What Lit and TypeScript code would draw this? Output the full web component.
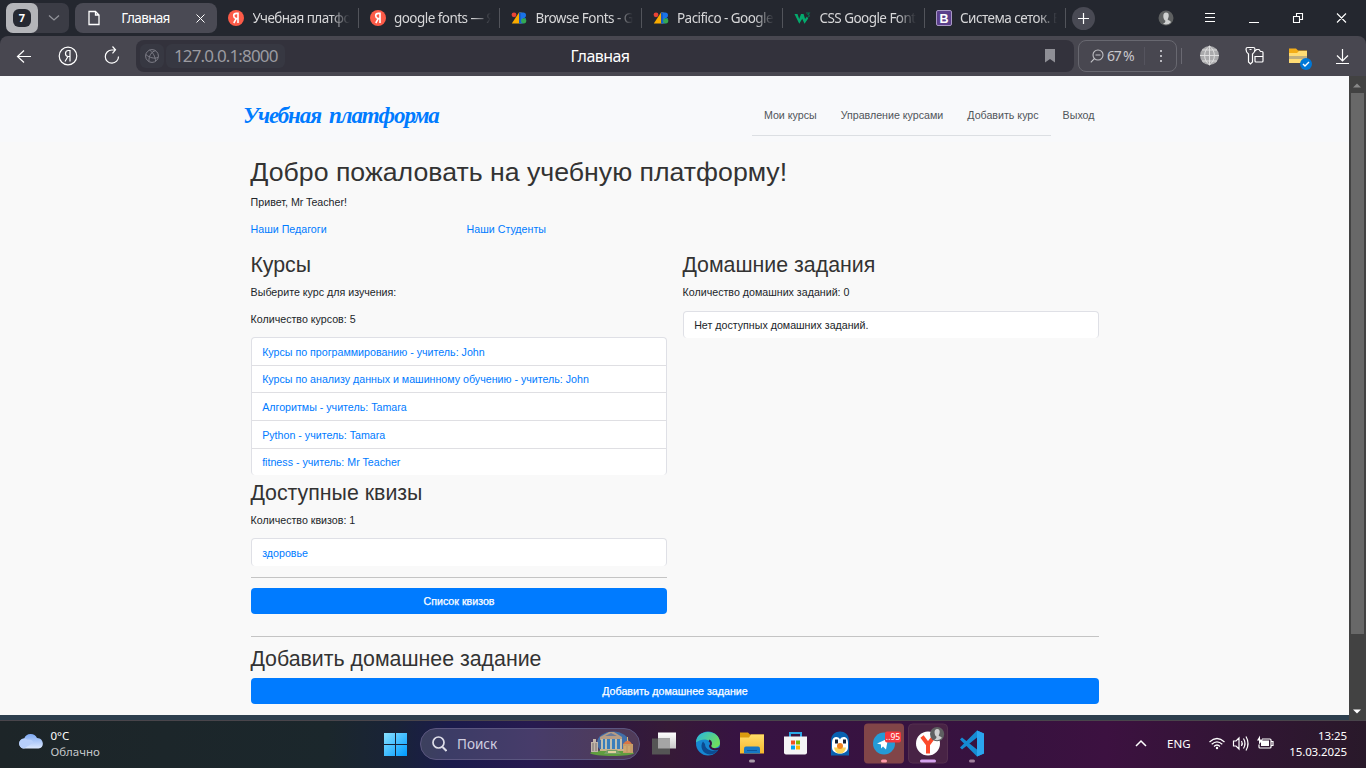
import { LitElement, html, css, svg } from "lit";
import { customElement, property } from "lit/decorators.js";

const yaIcon = html`<svg width="16" height="16" viewBox="0 0 16 16"><circle cx="8" cy="8" r="8" fill="#fc5b48"/><path d="M10 13V3.4H8.4C6.600 3.400 5.700 4.400 5.700 5.800c0 1.300.7 2.200 2.200 2.800H10M8.200 8.600 5.800 13" fill="none" stroke="#fff" stroke-width="1.600"/></svg>`;
const fontsIcon = html`<svg width="16" height="16" viewBox="0 0 16 16"><path d="M8 2.500h2.500v11H.8z" fill="#f9ab00"/><path d="M8.500 2.500h3.700a2.800 2.800 0 0 1 0 5.600H15l-3 5.400H8.500z" fill="#1a73e8"/><path d="M8 2.500h1.700v11H8z" fill="#185abc"/><circle cx="3" cy="4.800" r="2.400" fill="#ea4335"/><path d="M12 8.100a2.700 2.700 0 0 1 0 5.400z" fill="#0d652d"/><circle cx="12.700" cy="10.800" r="2.600" fill="#34a853"/></svg>`;
const w3Icon = html`<svg width="17" height="16" viewBox="0 0 17 16"><path d="M.5 4h3l1.700 5L7 4h2.600l1.500 5L13 6.500l1.200 2-3.700 5.200L8.200 8.800 5.300 13.700z" fill="#04aa6d"/><path d="M12 3h3.300l-1.300 1.500c1.500.2 1.700 1.800.2 2.500" fill="none" stroke="#06764e" stroke-width="1.100"/></svg>`;
const bIcon = html`<svg width="16" height="16" viewBox="0 0 16 16"><rect x=".5" y=".5" width="15" height="15" rx="1.500" fill="#5b3f8c" stroke="#a898c4"/><text x="8" y="12.500" font-family="Liberation Sans, sans-serif" font-size="12.500" font-weight="bold" fill="#fff" text-anchor="middle">B</text></svg>`;
const userDot = svg`<circle cx="8" cy="8" r="7.500" fill="#5e6061"/><path d="M8 2.500c2.300 0 3 1.700 2.700 3.700-.2 1.700-1 2.500-1 3.300 0 1 3 1 3.300 2.700A7.400 7.400 0 0 1 8 14.500a7 7 0 0 1-3-.7c2-.8 2.400-1.800 2.400-3C6 10 5.300 7.900 5.300 6c0-2 1-3.500 2.700-3.500z" fill="#cfd0d0"/>`;

interface Tab { title: string; icon: unknown; }
const tabs: Tab[] = [
  { title: "Учебная платформа", icon: yaIcon },
  { title: "google fonts — Яндекс", icon: yaIcon },
  { title: "Browse Fonts - Google", icon: fontsIcon },
  { title: "Pacifico - Google Fonts", icon: fontsIcon },
  { title: "CSS Google Fonts", icon: w3Icon },
  { title: "Система сеток. Bootstrap", icon: bIcon },
];

@customElement("browser-chrome")
class BrowserChrome extends LitElement {
  static styles = css`
    :host { display: block; height: 76px; background: #24272f; color: #e8e8ea; font: 14px "Noto Sans", sans-serif; }
    * { box-sizing: border-box; }
    svg { display: block; flex: none; }
    .tabs { display: flex; height: 36px; padding-left: 6px; align-items: center; }
    .group { display: flex; width: 63px; height: 30px; border-radius: 7px; background: #3b3c45; margin-right: 6px; }
    .count { width: 32px; height: 30px; border-radius: 7px; background: #b4b5b9; display: grid; place-items: center; }
    .badge { width: 18px; height: 18px; border-radius: 6px; background: #262932; color: #fff; font: bold 11px/18px "Noto Sans", sans-serif; text-align: center; }
    .more { display: grid; place-items: center; width: 31px; }
    .active { width: 142px; height: 30px; border-radius: 8px; background: #4a4a54; display: flex; align-items: center; padding-left: 13px; }
    .name { width: 67px; margin-left: 12px; text-align: center; letter-spacing: -.65px; font-size: 13.5px; color: #fff; }
    .close { margin-left: 17px; }
    .tab { width: 141.500px; height: 20px; display: flex; align-items: center; padding-left: 11px; border-right: 1px solid #52545b; }
    .label { flex: 1; margin: 0 8px 0 8.500px; overflow: hidden; white-space: nowrap; letter-spacing: -.55px; font-size: 13.5px; color: #d7d7d9; -webkit-mask-image: linear-gradient(90deg, #000 80%, transparent); mask-image: linear-gradient(90deg, #000 80%, transparent); }
    .plus { width: 23px; height: 23px; border-radius: 50%; background: #494a54; margin-left: 6px; display: grid; place-items: center; }
    .window { flex: 1; }
    .bar { display: flex; align-items: center; height: 40px; background: #484750; border-radius: 8px 8px 0 0; }
    .controls { width: 136px; }
    .address { width: 938px; height: 32px; border-radius: 8px; background: #33323c; display: flex; align-items: center; padding-left: 4px; }
    .site { width: 24px; height: 24px; border-radius: 6px; background: #373842; display: grid; place-items: center; }
    .host { width: 119px; height: 24px; margin-left: 2px; padding-left: 8px; background: #373842; border-radius: 6px; font-size: 17px; line-height: 23px; color: #9b9ba1; letter-spacing: -.85px; }
    .title { width: 80px; margin-left: 275px; font-size: 16px; letter-spacing: -.55px; color: #fff; text-align: center; }
    .mark { margin-left: 405px; }
    .zoom { width: 99px; height: 32px; margin-left: 4px; border: 1px solid #686870; border-radius: 8px; display: flex; align-items: center; padding-left: 11px; }
    .pct { width: 35px; margin: -2px 0 0 3px; color: #c8c8cc; letter-spacing: -1.2px; }
    .tools { width: 189px; }
  `;
  render() {
    return html`
      <div class="tabs">
        <div class="group"><div class="count"><div class="badge">7</div></div>
          <div class="more"><svg width="12" height="8" viewBox="0 0 12 8"><path d="M1 1.500 6 6l5-4.500" fill="none" stroke="#92939a" stroke-width="1.300"/></svg></div></div>
        <div class="active">
          <svg width="12" height="16" viewBox="0 0 12 16"><path d="M1 1.500h6.500L11 5v9.500H1zM7.500 1.500V5H11" fill="none" stroke="#fff" stroke-width="1.300"/></svg>
          <div class="name">Главная</div>
          <svg class="close" width="9" height="9" viewBox="0 0 9 9"><path d="m.5.5 8 8m0-8-8 8" stroke="#fff"/></svg>
        </div>
        ${tabs.map((t) => html`<div class="tab">${t.icon}<div class="label">${t.title}</div></div>`)}
        <div class="plus"><svg width="11" height="11" viewBox="0 0 11 11"><path d="M0 5.500h11M5.500 0v11" stroke="#fff" stroke-width="1.200"/></svg></div>
        <svg class="window" width="271" height="36" viewBox="0 0 271 36">
          <g transform="translate(63 10)">${userDot}</g>
          <g fill="none" stroke="#fff" stroke-width="1.100">
            <path d="M110 13.500h10M110 17.500h10M110 21.500h10M154 22.500h10M201.500 16v-2.500h6v6h-2.500M198.500 16.500h6v6h-6zM242 13.500l9 9m0-9-9 9"/>
          </g>
        </svg>
      </div>
      <div class="bar">
        <svg class="controls" width="136" height="40" viewBox="0 0 136 40">
          <g fill="none" stroke="#fff" stroke-width="1.200">
            <path d="M31 20.500H17.500m6.500-6-6.500 6 6.500 6"/>
            <circle cx="68" cy="20" r="8.800"/>
            <path d="M70 25.500v-11h-1.500c-2 0-3 1.200-3 3s1 2.800 2.500 3H70m-2 0-3 5"/>
            <path d="M118.500 20.500a6.600 6.600 0 1 1-6.700-6.500h3.200m-2.500-3.500 3 3.300-3 3.500"/>
          </g>
        </svg>
        <div class="address">
          <div class="site"><svg width="14" height="14" viewBox="0 0 14 14"><g fill="none" stroke="#7d7d87"><circle cx="7" cy="7" r="6.400"/><path d="M.8 5.500c4 3.500 8.500 4.300 12.200 3M10.500 1.700C6.500 2.500 3.500 7 4 12.600M4.500 1.200c3 1.500 6 6.500 6 11"/></g></svg></div>
          <div class="host">127.0.0.1:8000</div>
          <div class="title">Главная</div>
          <svg class="mark" width="10" height="14" viewBox="0 0 10 14"><path d="M0 0h10v13.500L5 10l-5 3.500z" fill="#8f8f96"/></svg>
        </div>
        <div class="zoom">
          <svg width="14" height="14" viewBox="0 0 14 14"><g fill="none" stroke="#c0c0c5" stroke-width="1.100"><circle cx="8" cy="6" r="5"/><path d="M4.500 9.500.8 13.300M5.500 6h5"/></g></svg>
          <div class="pct">67 %</div>
          <svg width="18" height="18" viewBox="0 0 18 18"><path d="M2.500 0v18" stroke="#55545e"/></svg>
          <svg width="3" height="13" viewBox="0 0 3 13"><path d="M0 0h2v2H0zM0 5h2v2H0zM0 10h2v2H0z" fill="#b8b8be"/></svg>
        </div>
        <svg class="tools" width="189" height="40" viewBox="0 0 189 40">
          <path d="M4.500 12v16" stroke="#6a6972"/>
          <circle cx="32.500" cy="19.500" r="9.500" fill="#aaaaac"/>
          <path d="M32.500 10v19M23 19.500h19M25 14h15M25 25h15M32.500 10c-6.500 5-6.500 14 0 19 6.500-5 6.500-14 0-19" fill="none" stroke="#e3e3e3" stroke-width=".9"/>
          <g fill="none" stroke="#fff" stroke-width="1.200"><path d="M69 13.200c0-1.200.7-1.700 1.700-1.700h5.600c1 0 1.700.5 1.700 1.700 0 2.200-1 3.800-2.500 4.800V26l-2 2-2-2v-8c-1.500-1-2.500-2.600-2.500-4.800zM72.500 13.500h2"/><path d="m78 15 1.500-1.500h2.500l1.500 2h1.500c.7 0 1 .4 1 1V25c0 .7-.3 1-1 1h-6c-.7 0-1-.3-1-1v-4.500h8"/></g>
          <path d="M112 12.500h7l2 2h9V27h-18z" fill="#f3ad18"/><path d="M112 17h8l2-2h8v12h-18z" fill="#ffdc74"/><path d="M112 20h18v3h-18z" fill="#a59b83" opacity=".7"/>
          <circle cx="129" cy="28" r="6" fill="#0078d7"/><path d="m126 28 2 2 4-4" fill="none" stroke="#fff" stroke-width="1.400"/>
          <path d="M165.500 13v12m-5.500-5.500 5.500 5.500 5.500-5.500M159 27.500h13" fill="none" stroke="#fff" stroke-width="1.200"/>
        </svg>
      </div>`;
  }
}

@customElement("course-list")
class CourseList extends LitElement {
  @property({ attribute: false }) items: string[] = [];
  @property({ type: Boolean }) plain = false;
  static styles = css`
    :host { display: block; border: 1px solid #dfe0e6; border-bottom: 0; border-radius: 4px; background: #fff; overflow: hidden; }
    .item { height: 26.670px; line-height: 16px; padding: 5.500px 10.170px 0; box-sizing: border-box; color: #007bff; }
    .item + .item { border-top: 1px solid #dfdfe3; height: 27.600px; }
    .item.plain { color: #212529; }
  `;
  render() {
    return this.items.map((i) => html`<div class="item ${this.plain ? "plain" : ""}">${i}</div>`);
  }
}

@customElement("study-page")
class StudyPage extends LitElement {
  static styles = css`
    :host { display: flex; height: 639px; background: #f9f9f9; font: 10.670px/16px "Liberation Sans", Arial, sans-serif; color: #212529; }
    * { box-sizing: border-box; }
    .body { flex: 1; }
    .nav { height: 66px; background: #f8f9fb; display: flex; padding: 0 242px 0 243px; justify-content: space-between; }
    .logo { width: 200px; height: 62px; padding-top: 22px; font: italic bold 23px/36px "Liberation Serif", serif; color: #007bff; white-space: nowrap; letter-spacing: -1.100px; word-spacing: 3.500px; }
    .links { display: flex; padding-top: 19px; }
    .link { height: 41px; padding: 12px 12.500px 0 11.500px; color: #50555a; border-bottom: 1px solid #dcdfe3; }
    .link:last-child { border-color: transparent; }
    .content { width: 848px; margin-left: 251px; padding-top: 14.300px; }
    h1, h2, p, hr { margin: 0; }
    h1 { font-size: 26.700px; line-height: 32px; font-weight: 400; margin: 0 0 5.700px -.7px; color: #333; }
    h2 { font-size: 21.330px; line-height: 25.600px; font-weight: 400; margin: 0 0 5.330px -.6px; color: #333; }
    p { margin: 0 0 10.670px -.4px; }
    .people { display: grid; grid-template-columns: 216px 1fr; color: #007bff; margin: 0 0 16px -.4px; }
    .columns { display: grid; grid-template-columns: 416px 416px; gap: 16px; padding-top: .3px; }
    .quiz { padding-top: 5.700px; }
    hr { height: 1px; border: 0; background: #c4c4c4; margin: 10.670px 0; }
    .button { height: 26px; border-radius: 4px; background: #007bff; color: #fff; text-align: center; line-height: 26px; -webkit-text-stroke: .25px #fff; }
    .quiz + hr { margin-bottom: 10px; }
    .end { margin: 22px 0 10.400px; }
    .end + h2 { margin-bottom: 5px; }
    .scroll { width: 17px; height: 644px; background: #424242; padding: 7px 2px 0 1px; display: flex; flex-direction: column; align-items: center; }
    .thumb { width: 13px; height: 541px; margin: 5px 0 75px; background: #686868; flex: none; }
  `;
  render() {
    return html`
      <div class="body">
        <nav class="nav">
          <div class="logo">Учебная платформа</div>
          <div class="links">${["Мои курсы", "Управление курсами", "Добавить курс", "Выход"].map((l) => html`<div class="link">${l}</div>`)}</div>
        </nav>
        <main class="content">
          <h1>Добро пожаловать на учебную платформу!</h1>
          <p>Привет, Mr Teacher!</p>
          <div class="people"><span>Наши Педагоги</span><span>Наши Студенты</span></div>
          <div class="columns">
            <section>
              <h2>Курсы</h2>
              <p>Выберите курс для изучения:</p>
              <p>Количество курсов: 5</p>
              <course-list .items=${["Курсы по программированию - учитель: John", "Курсы по анализу данных и машинному обучению - учитель: John", "Алгоритмы - учитель: Tamara", "Python - учитель: Tamara", "fitness - учитель: Mr Teacher"]}></course-list>
              <div class="quiz">
                <h2>Доступные квизы</h2>
                <p>Количество квизов: 1</p>
                <course-list .items=${["здоровье"]}></course-list>
              </div>
              <hr>
              <div class="button">Список квизов</div>
            </section>
            <section>
              <h2>Домашние задания</h2>
              <p>Количество домашних заданий: 0</p>
              <course-list plain .items=${["Нет доступных домашних заданий."]}></course-list>
            </section>
          </div>
          <hr class="end">
          <h2>Добавить домашнее задание</h2>
          <div class="button">Добавить домашнее задание</div>
        </main>
      </div>
      <div class="scroll">
        <svg width="8" height="5" viewBox="0 0 8 5"><path d="m0 4.500 4-4 4 4z" fill="#888"/></svg>
        <div class="thumb"></div>
        <svg width="8" height="5" viewBox="0 0 8 5"><path d="m0 .5 4 4 4-4z" fill="#fff"/></svg>
      </div>`;
  }
}

@customElement("task-bar")
class TaskBar extends LitElement {
  static styles = css`
    :host { display: flex; height: 48px; padding-bottom: 1px; align-items: center; color: #fff; font: 11.500px/16px "Noto Sans", sans-serif; border-top: 1px solid #49454b; box-sizing: border-box; background: linear-gradient(90deg, #1d2528 0, #1b272c 24%, #192338 29%, #1b1b4c 33%, #271a50 39%, #30193f 45%, #361a37 49%, #371342 54%, #37123f 74%, #3c1140 81%, #321535 90%, #29192a 100%); }
    * { box-sizing: border-box; }
    svg { display: block; flex: none; }
    .weather { width: 365px; display: flex; padding-left: 18px; align-items: center; }
    .cloud { margin-top: -6px; }
    .temp { margin-left: 6.500px; }
    .muted { color: #c4c8ca; }
    .search { width: 220px; height: 32px; margin: 0 0 0 12px; border-radius: 16px; border: 1px solid #5b5680; background: #ffffff26; display: flex; align-items: center; padding-left: 11px; }
    .query { flex: 1; margin-left: 10px; font-size: 13.500px; color: #d0cee0; }
    .tray { flex: 1; display: flex; align-items: center; }
    .lang { width: 42px; }
    .clock { flex: 1; text-align: right; padding-right: 19px; letter-spacing: -.1px; }
  `;
  render() {
    return html`
      <div class="weather">
        <svg class="cloud" width="26" height="18" viewBox="0 0 26 18"><defs><linearGradient id="c" x2="0" y2="1"><stop stop-color="#7ea9f2"/><stop offset="1" stop-color="#dce8ff"/></linearGradient></defs><path d="M6 16.500a5 5 0 0 1 .2-10A7 7 0 0 1 19 6c7 0 8 10 1.500 10.500z" fill="url(#c)"/><path d="M6 16.500a5 5 0 1 1 3.500-8.700c2.500-.8 5 .3 6 2.700" fill="#b7cffb"/></svg>
        <div class="temp"><div>0°C</div><div class="muted">Облачно</div></div>
      </div>
      <svg width="43" height="48" viewBox="365 0 43 48"><defs><linearGradient id="w" gradientUnits="userSpaceOnUse" x1="384" y1="12" x2="407" y2="35"><stop stop-color="#8ce2ff"/><stop offset="1" stop-color="#009cff"/></linearGradient></defs><path d="M384 13h11v11h-11zM396 13h11v11h-11zM384 25h11v11h-11zM396 25h11v11h-11z" fill="url(#w)"/></svg>
      <div class="search">
        <svg width="15" height="16" viewBox="0 0 15 16"><circle cx="6.500" cy="6.500" r="5.500" fill="none" stroke="#dedee9" stroke-width="1.700"/><path d="m10.500 11 4 4" stroke="#dedee9" stroke-width="2"/></svg>
        <div class="query">Поиск</div>
        <svg width="50" height="26" viewBox="0 0 50 26">
          <ellipse cx="24" cy="12" rx="16" ry="11.500" fill="#426fa8"/><path d="M1 22c5-4 40-4 44 0 0 4-42 4-44 0z" fill="#609d3f"/>
          <path d="M2 11h7v10H2zm2-3h3v3H4z" fill="#c2b5aa"/><path d="M4 12v8m3-8v8" stroke="#756f70"/><path d="M34 13h10v9H34z" fill="#c69c68"/><path d="M34 13q5-7 9 0z" fill="#d87745"/><path d="M38.500 6v4M36 15v6m4-6v6" stroke="#d8b276"/>
          <path d="M11 6 20 1h5l8 5v3H11z" fill="#b59c85"/><path d="M16 5l6-3 6 3z" fill="#687a9b"/><path d="M12 8h21v11H12z" fill="#397ebc"/><path d="M13 8v12m4-12v12m5-12v12m5-12v12m5-12v12" stroke="#e2cfad" stroke-width="1.600"/><path d="M11 18h24v2H11z" fill="#c9b28a"/><path d="M18 19h10l4 4H15z" fill="#78a069"/><path d="M19 20h8v2h-8z" fill="#e2cf9d"/>
        </svg>
      </div>
      <svg width="360" height="48" viewBox="640 0 360 48">
        <defs>
          <linearGradient id="t" x2="0" y2="1"><stop stop-color="#fff"/><stop offset="1" stop-color="#c8c8c8"/></linearGradient>
          <linearGradient id="e" x2="1" y2=".5"><stop stop-color="#25b5e6"/><stop offset="1" stop-color="#6edd60"/></linearGradient>
          <linearGradient id="f" x2="0" y2="1"><stop stop-color="#ffdc69"/><stop offset="1" stop-color="#f5b72d"/></linearGradient>
        </defs>
        <g transform="translate(0 .5)">
        <path d="M658 12h18v16h-18z" fill="url(#t)"/><path d="M652 18h18v16h-18z" fill="#555"/><path d="M658 18h12v10h-12z" fill="#a5a5a5"/>
        <circle cx="708" cy="23" r="12" fill="#1687d2"/><path d="M696 22c0-14 24-14 24 .5 0 5-8 6.500-10 3.500 2-3 0-7-5-7-4 0-7.500 1.500-9 3z" fill="url(#e)"/><path d="M703 21c-4 5 0 15 10 12.500 2-.5 4-2 5-4-6 2-13 0-13-6z" fill="#0c4b91"/><path d="M709 20c2.500 1 2.500 3.500 1 5.500 1 4 7 4 10 2" fill="none" stroke="#371342" stroke-width="2"/>
        <path d="M740 12h8l2 2h14v18h-24z" fill="#d99a0e"/><path d="M740 17h9l2-3h13v19h-24z" fill="url(#f)"/><path d="M744 33v-5q0-2 2-2h12q2 0 2 2v5z" fill="#1678c5"/><path d="M747 30h10" stroke="#0c569d"/><rect x="749" y="39" width="6" height="3" rx="1.500" fill="#a89aa9"/>
        <path d="M790 17v-4.500h11V17" fill="none" stroke="#2ba7e6" stroke-width="2"/><path d="M784 16h23v16q0 2-2 2h-19q-2 0-2-2z" fill="#f4f4f5"/><path d="M791 20h4v4h-4z" fill="#f25022"/><path d="M796 20h4v4h-4z" fill="#7fba00"/><path d="M791 25h4v4h-4z" fill="#00a4ef"/><path d="M796 25h4v4h-4z" fill="#ffb900"/>
        <path d="M831 35V20c0-12 18-12 18 0v15z" fill="#0861b1"/><path d="M832 22c0-6 6-7 8-3 2-4 8-3 8 3v5c0 8-16 8-16 0z" fill="#fff"/><path d="M834 27h12q-1 6-6 6t-6-6z" fill="#f9d65b"/><circle cx="840" cy="25.500" r="3" fill="#f2841e"/><path d="M835 19h3v4h-3zM843 19h3v4h-3z" fill="#132035"/>
        <rect x="864" y="3" width="40" height="40" rx="4" fill="#814548"/><circle cx="884" cy="23" r="11" fill="#259bd6"/><path d="m877 23 11-5-2 11-3-3-2 2v-4z" fill="#fff"/><rect x="885" y="11" width="16" height="11" rx="2" fill="#f5383c"/><text x="893" y="19.700" font-family="Noto Sans, sans-serif" font-size="8.500" fill="#fff" text-anchor="middle">..95</text><rect x="881" y="39" width="6" height="3" rx="1.500" fill="#ff9baa"/>
        <rect x="908.500" y="3.500" width="39" height="39" rx="4" fill="#482345" stroke="#54304f"/><circle cx="928" cy="23" r="12" fill="#fff"/><path d="m922 16 6 8v9m0-9 6-8" fill="none" stroke="#fb4a2b" stroke-width="4"/><g transform="translate(929.500 6) scale(.95)">${userDot}</g><rect x="920" y="39" width="16" height="3" rx="1.500" fill="#d4a2ee"/>
        <path d="m977 10 7 3v20l-7 3-17-17 2-2 15 12V17l-15 12-2-2z" fill="#168bd3"/><path d="m977 10 7 3v20l-7 3z" fill="#2ba5ef"/><rect x="969" y="39" width="6" height="3" rx="1.500" fill="#9f7f9c"/>
        </g>
      </svg>
      <div class="tray">
        <svg width="167" height="48" viewBox="1000 0 167 48"><path d="m1136 26 5-5 5 5" fill="none" stroke="#fff" stroke-width="1.500"/></svg>
        <div class="lang">ENG</div>
        <svg width="66" height="48" viewBox="1209 0 66 48"><g fill="none" stroke="#fff" stroke-width="1.200">
          <path d="M1209.500 22q7.500-7 15 0m-12.800 2.300q5.300-5 10.600 0m-8.300 2.200q3-3 6 0"/><circle cx="1217" cy="28" r="1.200" fill="#fff" stroke="none"/>
          <g transform="translate(-8 .5)"><path d="M1241.500 20.500h2.500l3-3v11l-3-3h-2.500zM1249.500 20.500q1.500 2.500 0 5m2-7.500q3 5 0 10m2.500-12q4 7 0 14"/></g>
          <g transform="translate(-8 .5)"><path d="M1270 18.500h8q1 0 1 1v7q0 1-1 1h-10q-1 0-1-1V24m12-3h2v4h-2"/><path d="M1269 25v-5h8v5.500h-8zM1265 20l3-5v4h3l-4 5v-4z" fill="#fff" stroke="none"/></g>
        </g></svg>
        <div class="clock"><div>13:25</div><div>15.03.2025</div></div>
      </div>`;
  }
}

@customElement("app-root")
class AppRoot extends LitElement {
  static styles = css`
    :host { display: block; width: 1366px; height: 768px; overflow: hidden; background: linear-gradient(90deg, #2d3f4e 0 1349px, #424242 1349px); }
    .desktop { display: flex; flex-direction: column; height: 768px; }
    .screen { height: 644px; }
  `;
  render() {
    return html`<div class="desktop"><browser-chrome></browser-chrome><div class="screen"><study-page></study-page></div><task-bar></task-bar></div>`;
  }
}
